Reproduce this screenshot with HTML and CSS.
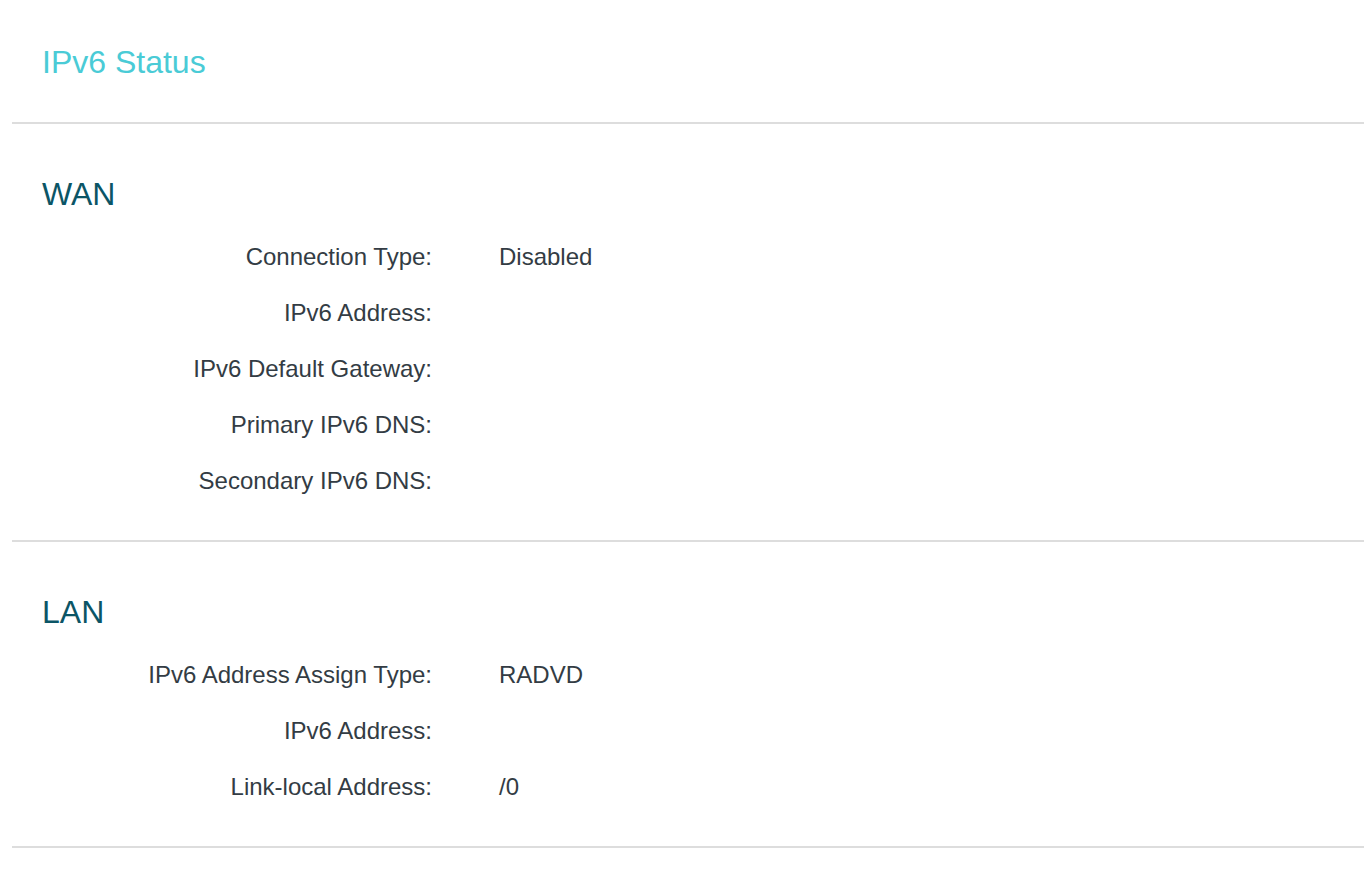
FILE: index.html
```html
<!DOCTYPE html>
<html>
<head>
<meta charset="utf-8">
<link rel="stylesheet" href="styles.css">
</head>
<body>
<div class="page">
  <div class="header">
    <h1 class="title">IPv6 Status</h1>
  </div>
  <section class="section">
    <h2 class="section-title">WAN</h2>
    <div class="rows">
      <div class="row"><span class="label">Connection Type:</span><span class="value">Disabled</span></div>
      <div class="row"><span class="label">IPv6 Address:</span><span class="value"></span></div>
      <div class="row"><span class="label">IPv6 Default Gateway:</span><span class="value"></span></div>
      <div class="row"><span class="label">Primary IPv6 DNS:</span><span class="value"></span></div>
      <div class="row"><span class="label">Secondary IPv6 DNS:</span><span class="value"></span></div>
    </div>
  </section>
  <section class="section">
    <h2 class="section-title">LAN</h2>
    <div class="rows">
      <div class="row"><span class="label">IPv6 Address Assign Type:</span><span class="value">RADVD</span></div>
      <div class="row"><span class="label">IPv6 Address:</span><span class="value"></span></div>
      <div class="row"><span class="label">Link-local Address:</span><span class="value">/0</span></div>
    </div>
  </section>
</div>
</body>
</html>
```
FILE: styles.css
```css
html, body {
  margin: 0;
  padding: 0;
  background: #ffffff;
  font-family: "Liberation Sans", Arial, sans-serif;
}
.page {
  padding-left: 12px;
}
.header {
  padding: 42px 30px 40px;
  border-bottom: 2px solid #dddddd;
}
.title {
  margin: 0;
  font-size: 32px;
  line-height: 40px;
  font-weight: normal;
  color: #4acbd6;
}
.section {
  padding: 50px 30px 31px;
  border-bottom: 2px solid #dddddd;
}
.section-title {
  margin: 0 0 15px;
  font-size: 32px;
  line-height: 40px;
  font-weight: normal;
  color: #0b5566;
}
.row {
  display: flex;
  height: 56px;
  align-items: center;
  font-size: 24px;
  color: #333c44;
}
.label {
  width: 390px;
  text-align: right;
  padding-right: 67px;
}
```
